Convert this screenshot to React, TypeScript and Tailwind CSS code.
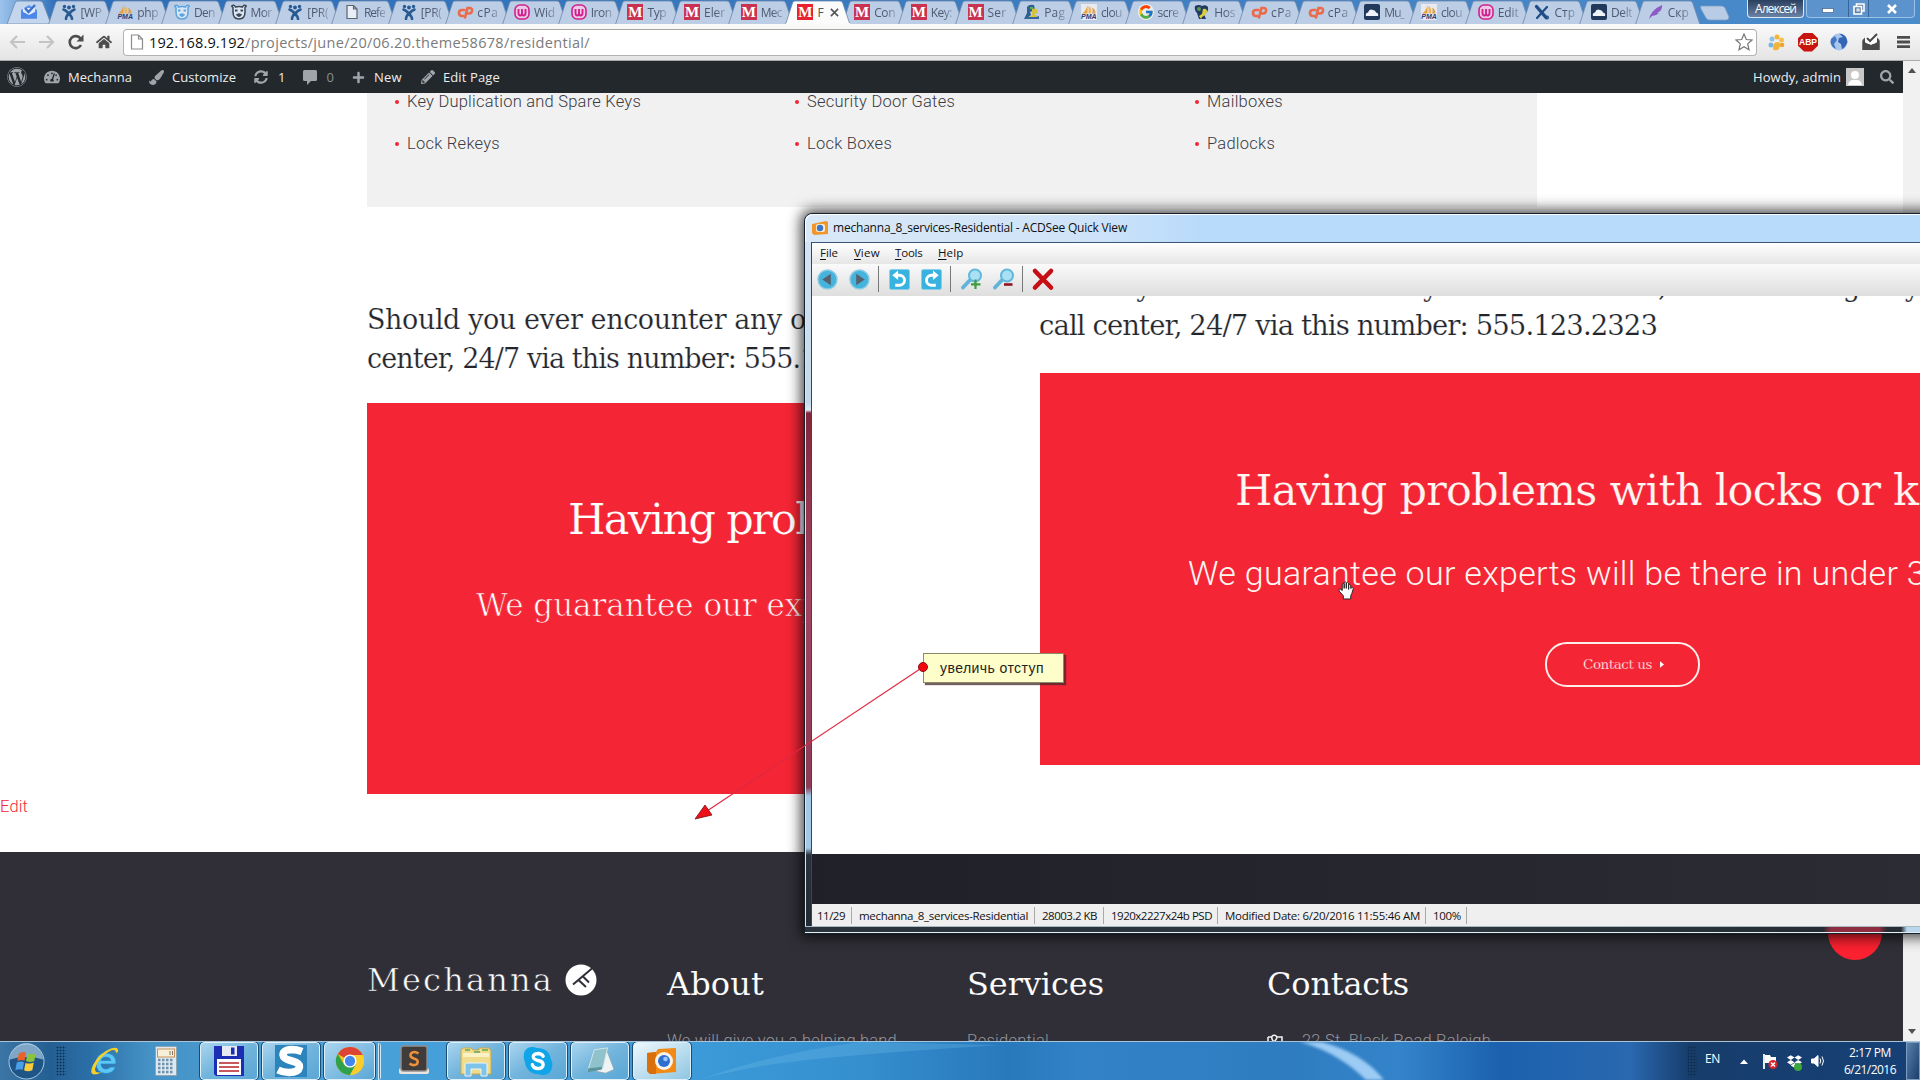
import React, { useLayoutEffect, useRef, useState } from "react";
import { FaWordpress, FaTachometerAlt, FaPaintBrush, FaSyncAlt, FaDropbox, FaHome, FaPlus, FaPencilAlt, FaSearch } from "react-icons/fa";
import { FcGoogle } from "react-icons/fc";

/* Text run spread to a given width through its letter spacing. */
function Fit({ w, children, className = "" }: { w: number; children: string; className?: string }) {
  const ref = useRef<HTMLSpanElement>(null);
  const [ls, setLs] = useState(0);
  useLayoutEffect(() => {
    if (ref.current) setLs((w - ref.current.getBoundingClientRect().width) / children.length);
  }, [w, children]);
  return (
    <span ref={ref} className={"inline-block whitespace-pre " + className} style={{ letterSpacing: ls + "px" }}>
      {children}
    </span>
  );
}

const slab = "font-['Roboto_Slab','DejaVu_Serif',serif]";
const ui = "font-['Segoe_UI','Open_Sans','Noto_Sans',sans-serif]";

function Favicon({ kind }: { kind: string }) {
  switch (kind) {
    case "jira":
      return (
        <svg viewBox="0 0 16 16" className="size-4">
          <g fill="none" stroke="#285a92" strokeWidth="2.6" strokeLinecap="round">
            <path d="M2.5 5.5C5 6.5 7.500 8.500 8 11M13.500 5.500C11 6.500 8.500 8.500 8 11" />
            <path d="M5 15C5 12 7 10 9 8.800M11 15C11 12.500 9.500 11 7 9" />
          </g>
          <circle cx="3.500" cy="2.500" r="1.700" fill="#285a92" />
          <circle cx="8" cy="3.500" r="1.900" fill="#285a92" />
          <circle cx="12.500" cy="2.500" r="1.700" fill="#285a92" />
        </svg>
      );
    case "pma":
    case "pma2":
      return (
        <div className={"flex size-4 flex-col items-center justify-end " + (kind === "pma2" ? "bg-[#e8eaf0]" : "")}>
          <svg viewBox="0 0 16 10" className="h-2.5 w-4">
            <path d="M1 9.500C4 8 6 4 6.500 0.500V9.500z" fill="#e8a13c" />
            <path d="M7.500 9.500V2C10 3 10.500 6 10 9.500z" fill="#f0b45c" />
            <path d="M11 9.500C12 7 11.500 5 11 3.500C14 5 14.500 7.500 14.500 9.500z" fill="#d9a25a" />
          </svg>
          <span className="font-['Liberation_Sans',sans-serif] text-[7px] leading-[6px] font-bold text-[#2b3c7a] italic">PMA</span>
        </div>
      );
    case "bear":
    case "bear2": {
      const c = kind === "bear" ? "#5aa2e0" : "#3b4652";
      return (
        <svg viewBox="0 0 16 16" className="size-4" fill="none" stroke={c} strokeWidth="1.500">
          <path d="M2 3.500Q0 2 1.500 1.500Q3.500 0.800 4.500 3Q8 2 11.500 3Q12.500 0.800 14.500 1.500Q16 2 14 3.500V8Q14 15 8 15Q2 15 2 8z" fill="#dbe7f4" />
          <path d="M4 6.500h2.500M9.500 6.500h2.500" strokeWidth="1.800" />
          <path d="M5.500 10.500Q8 8.800 10.500 10.500Q10 12.500 8 12.500Q6 12.500 5.500 10.500z" fill={c} strokeWidth="0.800" />
        </svg>
      );
    }
    case "doc":
      return (
        <svg viewBox="0 0 16 16" className="size-4" fill="#e9eef6" stroke="#5c6470" strokeWidth="1.200">
          <path d="M3 1.500h6.500l3.500 3.500v9.500H3zM9.500 1.500V5H13" />
        </svg>
      );
    case "cp":
      return (
        <svg viewBox="0 0 17 16" className="h-4 w-[17px]" fill="none" stroke="#ea6a4a" strokeWidth="2.600" strokeLinecap="round">
          <path d="M7.500 6H5Q2 6 2 9Q2 12 5 12H6" />
          <path d="M8 13.500L10.500 4H12.500Q15.500 4 15 7Q14.500 9.500 12 9.500H11" />
        </svg>
      );
    case "w":
      return (
        <svg viewBox="0 0 16 16" className="size-4" fill="none" stroke="#d1208e">
          <rect x="1" y="1" width="14" height="14" rx="5" strokeWidth="1.600" fill="#ecc9e4" />
          <path d="M4.500 5v4Q4.500 11.500 6.300 11.500Q8 11.500 8 9.500V5M8 9.500Q8 11.500 9.700 11.500Q11.500 11.500 11.500 9V5" strokeWidth="1.900" />
        </svg>
      );
    case "m":
    case "mA":
      return (
        <div className={"flex size-4 items-center justify-center font-['Liberation_Serif',serif] text-[15px] leading-4 font-bold text-white " + (kind === "mA" ? "bg-[#e8232f]" : "bg-[#c93352]")}>M</div>
      );
    case "py":
      return (
        <svg viewBox="0 0 16 16" className="size-4">
          <path d="M3 3Q5 0 10 1L11 6L6 8L7 11L2 15H0L3 9z" fill="#2d5f8f" />
          <path d="M8 5Q13 3 14 8Q13 10 10 10L13 12V15H3L8 11z" fill="#d8c23a" />
          <path d="M1 15h14v-3l-3 1H4z" fill="#35679a" />
          <path d="M6 3h3v2H6z" fill="#5fae68" />
        </svg>
      );
    case "host":
      return (
        <svg viewBox="0 0 16 16" className="size-4">
          <path d="M1 2Q5 0 8 2Q12 0 14 3Q15 8 10 10L12 15H5L3 9Q0 6 1 2z" fill="#223a63" />
          <path d="M9 5Q13 4 13 8Q12 11 8 13L7 15L5 12L8 10z" fill="#d9cf3a" />
          <circle cx="5" cy="5" r="2" fill="#5b9a4a" />
        </svg>
      );
    case "g":
      return <FcGoogle className="size-4 rounded-full bg-[#e6edf7]" />;
    case "cloud":
      return (
        <svg viewBox="0 0 16 16" className="size-4">
          <rect width="16" height="16" rx="2" fill="#22395c" />
          <path d="M2 12Q1 9 4 8.500Q5.500 4 9 6Q11.500 6 12 8.500Q15 9 14 12z" fill="#eef3fa" />
        </svg>
      );
    case "x":
      return (
        <svg viewBox="0 0 16 16" className="size-4" fill="none" stroke="#1f4d86" strokeLinecap="round">
          <path d="M2.500 2.500L12 13.500" strokeWidth="3.400" />
          <path d="M13 3L3 14" strokeWidth="2.200" />
          <circle cx="13" cy="13.500" r="1.400" strokeWidth="1.200" />
        </svg>
      );
    default:
      return (
        <svg viewBox="0 0 16 16" className="size-4">
          <path d="M1 15Q3 6 14 1Q15 6 9 9L11 9Q8 12 4 12z" fill="#8a5cc4" />
        </svg>
      );
  }
}

const tabs: [string, string][] = [
  ["jira", "[WP"], ["pma", "php"], ["bear", "Den"], ["bear2", "Mor"], ["jira", "[PR("], ["doc", "Refe"], ["jira", "[PR("],
  ["cp", "cPa"], ["w", "Wid"], ["w", "Iron"], ["m", "Typ"], ["m", "Eler"], ["m", "Mec"], ["mA", "F"], ["m", "Con"],
  ["m", "Key:"], ["m", "Ser"], ["py", "Pag"], ["pma2", "clou"], ["g", "scre"], ["host", "Hos"], ["cp", "cPa"],
  ["cp", "cPa"], ["cloud", "Mu_"], ["pma2", "clou"], ["w", "Edit"], ["x", "Стр"], ["cloud", "Delt"], ["feather", "Скр"],
];

function TabStrip() {
  return (
    <div className="flex h-6 bg-linear-to-r from-[#9cc3ec] via-[#2b6db8] via-3% to-[#4b8ccb]">
      <div className="relative flex h-6 w-[48px] shrink-0 items-start pt-1 pl-[21px]">
        <svg viewBox="0 0 52 24" className="absolute top-0 left-[7px] h-6 w-[52px]">
          <path d="M0 24L8 3Q9 1 11 1H33Q35 1 36 3L44 24z" fill="#c3d6ee" stroke="#7089a8" strokeWidth="0.800" />
        </svg>
        <svg viewBox="0 0 16 16" className="relative size-4">
          <path d="M0 6L8 1L16 6V14.500H0z" fill="#5b94ee" />
          <path d="M2 4h12v4L8 11L2 8z" fill="#dfeafb" />
          <path d="M4 4L7.500 8L14 1" fill="none" stroke="#3f6fca" strokeWidth="2.400" />
          <path d="M0 7L8 11.500L16 7V14.500H0z" fill="#4b86e8" />
        </svg>
      </div>
      {tabs.map(([k, t], i) => {
        const on = k === "mA";
        return (
          <div key={i} className={"relative flex h-6 w-[56.7px] shrink-0 pt-1 pl-[12.5px] " + (on ? "z-10" : "")}>
            <svg viewBox="0 0 68 24" className="absolute top-0 left-0 h-6 w-[68px]">
              <path d="M0.500 24.500L7.500 3Q8 1 10 1H55Q57 1 57.700 3L65 24.500z" fill={on ? "#fbfbfc" : "#bccde6"} stroke="#6f88ab" strokeWidth="0.800" />
              {on && <path d="M1 24h64" stroke="#fbfbfc" strokeWidth="2" />}
            </svg>
            <div className="relative h-4 w-[17px] shrink-0"><Favicon kind={k} /></div>
            <div className={ui + " relative ml-[3px] text-[12px] leading-[18px] whitespace-nowrap " + (on ? "w-[8px] text-[#555]" : "text-[#4c5a6e] [mask-image:linear-gradient(90deg,#000_55%,rgba(0,0,0,0.35))]")}>{on ? t : <Fit w={t === "Ser" || t === "Typ" ? 19 : 21}>{t}</Fit>}</div>
            {on && (
              <svg viewBox="0 0 10 10" className="relative mt-1 ml-[5px] size-[9px] shrink-0"><path d="M1 1L9 9M9 1L1 9" stroke="#555" strokeWidth="1.800" /></svg>
            )}
          </div>
        );
      })}
      <svg viewBox="0 0 34 24" className="relative ml-[6px] h-6 w-[34px] shrink-0">
        <path d="M3 6H23Q26 6 27 8L31 17Q31 20 28 20H12Q9 20 8 18L3 9Q2 6 3 6z" fill="#b9cce6" stroke="#7f9dc2" strokeWidth="0.800" />
      </svg>
      <div className={ui + " ml-auto flex h-[18px] w-[57px] items-center justify-center rounded-b border border-t-0 border-[#dbe8f6] bg-linear-to-b from-[#2c3f5e] to-[#6a83a6] text-[12px] text-white"}>
        <Fit w={41}>Алексей</Fit>
      </div>
      <div className="mr-[5px] ml-[2px] flex h-[18px] w-[109px] divide-x divide-[#35659b] rounded-b border border-t-0 border-[#9cc0e6] bg-[#5d93cd]">
        <div className="flex w-[42px] items-center justify-center pt-1"><svg viewBox="0 0 12 5" className="h-[5px] w-3"><rect x="0.500" y="0.500" width="11" height="4" fill="#fff" stroke="#36506e" strokeWidth="0.600" /></svg></div>
        <div className="flex w-[20px] items-center justify-center"><svg viewBox="0 0 12 12" className="size-3" fill="#5d7ea6" stroke="#fff" strokeWidth="1.600"><path d="M3.500 3V1h7.500v7h-2" /><rect x="1" y="3.500" width="7.500" height="7.500" /><rect x="4" y="6" width="2" height="2" strokeWidth="1" /></svg></div>
        <div className="flex grow items-center justify-center"><svg viewBox="0 0 12 10" className="h-2.5 w-3"><path d="M2 1L10 9M10 1L2 9" stroke="#fff" strokeWidth="2.600" /></svg></div>
      </div>
    </div>
  );
}

function Toolbar() {
  return (
    <div className="flex h-[37px] items-center border-b border-[#a9a9a9] bg-linear-to-b from-[#fafafa] to-[#e4e4e4]">
      <svg viewBox="0 0 16 14" className="ml-[9px] h-3.5 w-4" fill="none" stroke="#c3c3c3" strokeWidth="2.200"><path d="M16 7H2M8 1L2 7L8 13" /></svg>
      <svg viewBox="0 0 16 14" className="ml-[14px] h-3.5 w-4" fill="none" stroke="#c3c3c3" strokeWidth="2.200"><path d="M0 7H14M8 1L14 7L8 13" /></svg>
      <svg viewBox="0 0 16 16" className="ml-[13px] size-4" fill="none" stroke="#4d4d4d" strokeWidth="2.600"><path d="M13 11A6 6 0 1 1 12.500 4.500" /><path d="M15.500 0.500V7.500H8.500z" fill="#4d4d4d" stroke="none" /></svg>
      <FaHome className="ml-[12px] size-4 text-[#4d4d4d]" />
      <div className="ml-[11px] flex h-[27px] w-[1634px] items-center rounded-sm border border-[#b3b3b3] border-t-[#a0a89e] bg-white">
        <svg viewBox="0 0 14 16" className="ml-[6px] h-4 w-3.5" fill="#fff" stroke="#8c8c8c" strokeWidth="1.200"><path d="M1.500 1h7l4 4v10h-11zM8.500 1v4h4" /></svg>
        <div className={ui + " ml-[5px] pt-px text-[14.5px] text-[#7b7b7b]"}><Fit w={96} className="text-[#111]">192.168.9.192</Fit><Fit w={345}>/projects/june/20/06.20.theme58678/residential/</Fit></div>
        <svg viewBox="0 0 18 18" className="mr-[3px] ml-auto size-[18px]" fill="#fff" stroke="#777" strokeWidth="1.200"><path d="M9 1L11.300 6.500L17 7L12.700 10.900L14 16.700L9 13.700L4 16.700L5.300 10.900L1 7L6.700 6.500z" /></svg>
      </div>
      <svg viewBox="0 0 17 17" className="ml-[11px] size-[17px]">
        <circle cx="4" cy="5" r="2.500" fill="#8ec1ea" /><circle cx="9" cy="3" r="2.500" fill="#f2b53a" /><circle cx="13.500" cy="6" r="2.500" fill="#f4c04f" />
        <circle cx="14" cy="11" r="2.300" fill="#eba52f" /><circle cx="3" cy="11" r="2.500" fill="#7ab3e6" /><path d="M5 15Q5 8 9 8Q13 8 12 12Q11 17 8 16Q6 17 5 15z" fill="#f2b53a" />
      </svg>
      <div className="ml-[13px] flex h-[19px] w-5 items-center justify-center bg-[#c8150f] font-['Liberation_Sans',sans-serif] text-[8.500px] font-bold text-white [clip-path:polygon(30%_0,70%_0,100%_30%,100%_70%,70%_100%,30%_100%,0_70%,0_30%)]">ABP</div>
      <svg viewBox="0 0 18 18" className="ml-[12px] size-[18px]"><circle cx="9" cy="9" r="8.500" fill="#a9c7ee" /><path d="M9 0.500Q17 1 17.500 9Q15 15 12 16L11 11L8 9L9 5L13 4z" fill="#3464b4" /><path d="M1 6L5 3L7 7L4 11L6 16Q1 14 0.500 9z" fill="#4576c4" /></svg>
      <svg viewBox="0 0 18 18" className="ml-[14px] size-[18px]"><path d="M0.500 7L3 4.500V11h12V4.500L17.500 7V17H0.500z" fill="#4a4a4a" /><path d="M3 5L9 1L15 5V9L9 12L3 9z" fill="#fff" /><path d="M0.500 8L9 12.500L17.500 8V17H0.500z" fill="#4a4a4a" /><path d="M5 5L8 8L15 1" fill="none" stroke="#4a4a4a" strokeWidth="2" /></svg>
      <svg viewBox="0 0 14 14" className="ml-[17px] h-3.5 w-[13px]" fill="#4d4d4d"><path d="M0 0.500h14v3H0zM0 5.500h14v3H0zM0 10.500h14v3H0z" /></svg>
    </div>
  );
}

function AdminBar() {
  return (
    <div className={ui + " flex h-8 shrink-0 items-center bg-[#23282d] text-[13px] text-[#eee]"}>
      <FaWordpress className="ml-[7px] size-5 text-[#a0a5aa]" />
      <FaTachometerAlt className="ml-[17px] size-4 text-[#a0a5aa]" />
      <Fit w={64} className="ml-[8px] pt-px">Mechanna</Fit>
      <FaPaintBrush className="ml-[17px] size-[15px] text-[#a0a5aa]" />
      <Fit w={64} className="ml-[8px] pt-px">Customize</Fit>
      <FaSyncAlt className="ml-[18px] size-[14px] text-[#a0a5aa]" />
      <span className="ml-[10px] pt-px">1</span>
      <svg viewBox="0 0 14 15" className="ml-[18px] h-[15px] w-3.5" fill="#a0a5aa"><path d="M1.500 0h11Q14 0 14 1.500v8Q14 11 12.500 11H8L4 15V11H1.500Q0 11 0 9.500v-8Q0 0 1.500 0z" /></svg>
      <span className="ml-[9px] pt-px text-[#8a8f94]">0</span>
      <FaPlus className="ml-[18px] size-[13px] text-[#a0a5aa]" />
      <Fit w={28} className="ml-[9px] pt-px">New</Fit>
      <FaPencilAlt className="ml-[19px] size-[14px] text-[#a0a5aa]" />
      <Fit w={57} className="ml-[8px] pt-px">Edit Page</Fit>
      <Fit w={88} className="mr-[5px] ml-auto pt-px">Howdy, admin</Fit>
      <svg viewBox="0 0 18 18" className="size-[18px]"><rect width="18" height="18" fill="#c8c8c8" /><circle cx="9" cy="7" r="4" fill="#fff" /><path d="M2 17Q3 12 7 12H11Q15 12 16 17z" fill="#fff" /></svg>
      <FaSearch className="mr-[9px] ml-[16px] size-[14px] text-[#a0a5aa]" />
    </div>
  );
}

const columns: [string, number][][] = [
  [["Key Duplication and Spare Keys", 234], ["Lock Rekeys", 93]],
  [["Security Door Gates", 148], ["Lock Boxes", 85]],
  [["Mailboxes", 76], ["Padlocks", 68]],
];

function SitePage() {
  return (
    <div className="flex w-[1903px] flex-col overflow-hidden bg-white font-['Roboto',sans-serif]">
      <AdminBar />
      <div className="ml-[367px] flex h-[114px] w-[1170px] shrink-0 bg-[#f1f1f1] pl-[28px]">
        {columns.map((c, i) => (
          <div key={i} className="-mt-[12px] w-[400px] shrink-0">
            {c.map(([t, w]) => (
              <div key={t} className="flex h-[42px] items-center text-[16.500px] font-light text-[#3a3a42]">
                <span className="mr-[8px] size-1 rounded-full bg-[#f42535]" />
                <Fit w={w}>{t}</Fit>
              </div>
            ))}
          </div>
        ))}
      </div>
      <div className={slab + " mt-[93px] ml-[367px] h-[103px] shrink-0 text-[27px] leading-[39px] text-[#23252b] [-webkit-text-stroke:0.2px_#fff]"}>
        <div><Fit w={484}>Should you ever encounter any of th</Fit></div>
        <div><Fit w={482}>center, 24/7 via this number: 555.123</Fit></div>
      </div>
      <div className={slab + " ml-[367px] h-[391px] w-[1170px] shrink-0 bg-[#f42535] text-white"}>
        <div className="pt-[86px] pl-[201px] text-[43px] leading-[60px] [-webkit-text-stroke:0.2px_#f42535]"><Fit w={253}>Having prob</Fit></div>
        <div className="mt-[34px] pl-[109px] text-[31px] leading-[44px] [-webkit-text-stroke:0.7px_#f42535]"><Fit w={346}>We guarantee our exp</Fit></div>
      </div>
      <div className="h-[58px] shrink-0 text-[16.500px] leading-[25px] font-light text-[#f42535]"><Fit w={28}>Edit</Fit></div>
      <div className="relative flex h-[189px] shrink-0 overflow-hidden bg-[#302f37] pl-[367px] text-white">
        <div className="absolute top-[54px] left-[1828px] size-[54px] rounded-full bg-[#fb2130]" />
        <div className="flex w-[300px] items-start pt-[109px]">
          <div className={slab + " -mt-px text-[32px] leading-[40px] [-webkit-text-stroke:0.6px_#302f37]"}><Fit w={187}>Mechanna</Fit></div>
          <svg viewBox="0 0 32 32" className="mt-[3px] ml-[11px] size-8">
            <circle cx="16" cy="16" r="15.500" fill="#fff" />
            <path d="M27.500 4L8 20.500M13.500 16L21 23M18 12.500L24 18.500" stroke="#302f37" strokeWidth="2" fill="none" />
          </svg>
        </div>
        {([["About", 97, "We will give you a helping hand", 230], ["Services", 137, "Residential", 82]] as [string, number, string, number][]).map(([h, w, t, tw]) => (
          <div key={h} className="w-[300px] pt-[110px]">
            <div className={slab + " text-[32px] leading-[44px] [-webkit-text-stroke:0.1px_#302f37]"}><Fit w={w}>{h}</Fit></div>
            <div className="mt-[22px] text-[16.500px] leading-[25px] font-light text-[#94949a]"><Fit w={tw}>{t}</Fit></div>
          </div>
        ))}
        <div className="pt-[110px]">
          <div className={slab + " text-[32px] leading-[44px] [-webkit-text-stroke:0.1px_#302f37]"}><Fit w={142}>Contacts</Fit></div>
          <div className="mt-[22px] flex text-[16.500px] leading-[25px] font-light text-[#94949a]">
            <svg viewBox="0 0 16 16" className="mt-[6px] mr-[19px] size-4" fill="none" stroke="#eee" strokeWidth="1.600"><path d="M1 3h3M10 3h5v11H1V3M5 2Q8 0 10 3Q10 5 7 8Q4 5 5 2" /></svg>
            <Fit w={189}>22 St. Black Road Raleigh</Fit>
          </div>
        </div>
      </div>
    </div>
  );
}

function Rotate({ flip }: { flip?: boolean }) {
  return (
    <svg viewBox="0 0 22 22" className={"size-[21px] " + (flip ? "-scale-x-100" : "")}>
      <rect x="0.500" y="0.500" width="21" height="21" rx="2" fill="#38b2de" stroke="#8ad0ea" />
      <path d="M8 6.500H11A5 5 0 0 1 11 17H6.500" fill="none" stroke="#fff" strokeWidth="3" />
      <path d="M3.500 6.500L9.500 1.500V11.500z" fill="#fff" />
    </svg>
  );
}

function Magnifier({ plus }: { plus?: boolean }) {
  return (
    <svg viewBox="0 0 22 22" className="size-[22px]">
      <path d="M2 19.500L9 12" stroke="#5fb4da" strokeWidth="3.800" strokeLinecap="round" />
      <circle cx="14" cy="7.500" r="6" fill="#a9e0f4" stroke="#5fb8dc" strokeWidth="2" />
      {plus ? <path d="M14.500 11.500V21M10 16.300H19.500" stroke="#3f9c3c" strokeWidth="2.200" /> : <path d="M11 16.500H19.500" stroke="#8f1424" strokeWidth="2.600" />}
    </svg>
  );
}

const statusItems: [string, number, number][] = [
  ["11/29", 28, 39], ["mechanna_8_services-Residential", 169, 183], ["28003.2 KB", 55, 69],
  ["1920x2227x24b PSD", 101, 114], ["Modified Date: 6/20/2016 11:55:46 AM", 195, 208], ["100%", 28, 41],
];

function QuickView() {
  return (
    <div className="absolute top-[213px] left-[804px] flex h-[721px] w-[1130px] flex-col rounded-tl-lg border border-[#14202c] bg-[#b9dafb] shadow-[0_0_14px_3px_rgba(0,0,0,0.75)]">
      <div className="flex h-[28px] shrink-0 items-start rounded-tl-lg border-t border-l border-white bg-linear-to-r from-[#d9e8f7] via-[#cfe3f8] via-25% to-[#b9dbfb] to-35%">
        <svg viewBox="0 0 16 14" className="mt-[6px] ml-[6px] h-3.5 w-4"><path d="M0 3L14 0L16 1V13L2 14L0 12z" fill="#f0962a" /><rect x="4" y="3" width="9" height="8" rx="2" fill="#fbe9c8" /><circle cx="8" cy="7" r="3.200" fill="#3a76cc" /></svg>
        <Fit w={294} className={ui + " mt-[3px] ml-[5px] text-[12px] leading-5 text-[#111]"}>mechanna_8_services-Residential - ACDSee Quick View</Fit>
      </div>
      <div className="flex min-h-0 grow">
        <div className="w-[7px] shrink-0 border-r border-l border-[#d8e4ee] border-r-[#3a4652] bg-[linear-gradient(180deg,#d4e4f4_0,#c3d8ea_160px,#e0eaf2_168px,#83273c_171px,#a24562_350px,#8f3b55_545px,#a3c9e8_554px,#a3c9e8_606px,#2a323d_613px,#232a33_100%)]" />
        <div className="flex grow flex-col">
          <div className="flex h-[22px] shrink-0 items-start border-t border-[#3a5676] bg-linear-to-b from-white to-[#e6e6e6] pt-px font-['Tahoma','Open_Sans','Noto_Sans',sans-serif] text-[11.500px] leading-[18px] text-[#111]">
            {([["File", 18, 34], ["View", 25, 41], ["Tools", 27, 43], ["Help", 23, 40]] as [string, number, number][]).map(([t, w, b], i) => (
              <div key={t} className={"flex " + (i === 0 ? "ml-[8px]" : "")} style={{ width: b }}>
                <span className="underline underline-offset-2">{t[0]}</span><Fit w={w - 6}>{t.slice(1)}</Fit>
              </div>
            ))}
          </div>
          <div className="flex h-[32px] shrink-0 items-center bg-linear-to-b from-[#fafafa] to-[#dedede] pb-[2px]">
            <svg viewBox="0 0 22 22" className="ml-[5px] size-[21px]"><circle cx="11" cy="11" r="10" fill="#45b3dc" stroke="#8ccde6" strokeWidth="1.500" /><path d="M5.500 11L14.500 5V17z" fill="#55616e" /></svg>
            <svg viewBox="0 0 22 22" className="ml-[11px] size-[21px]"><circle cx="11" cy="11" r="10" fill="#45b3dc" stroke="#8ccde6" strokeWidth="1.500" /><path d="M16.500 11L7.500 5V17z" fill="#55616e" /></svg>
            <div className="ml-[8px] h-[26px] w-px bg-[#777]" />
            <div className="ml-[10px]"><Rotate /></div>
            <div className="ml-[11px]"><Rotate flip /></div>
            <div className="ml-[8px] h-[26px] w-px bg-[#777]" />
            <div className="ml-[10px]"><Magnifier plus /></div>
            <div className="ml-[10px]"><Magnifier /></div>
            <div className="ml-[7px] h-[26px] w-px bg-[#777]" />
            <svg viewBox="0 0 24 24" className="ml-[8px] size-6"><path d="M4 4L20 20.500M20 4L4 20.500" stroke="#c60f14" strokeWidth="4.600" strokeLinecap="round" /></svg>
          </div>
          <div className="flex h-[608px] shrink-0 flex-col overflow-hidden bg-white">
            <div className={slab + " flow-root h-[77px] shrink-0 pl-[227px] text-[27.500px] leading-[38px] whitespace-nowrap text-[#23252b] [-webkit-text-stroke:0.2px_#fff]"}>
              <div className="-mt-[29px]"><Fit w={880}>Should you ever encounter any of these troubles, call our emergency</Fit></div>
              <div className="mt-[1px]"><Fit w={618}>call center, 24/7 via this number: 555.123.2323</Fit></div>
            </div>
            <div className="ml-[228px] h-[392px] w-[900px] shrink-0 overflow-hidden bg-[#f42535] whitespace-nowrap text-[#fff6f2]">
              <div className={slab + " pt-[87px] pl-[195px] text-[43px] leading-[60px] [-webkit-text-stroke:0.2px_#f42535]"}><Fit w={775}>Having problems with locks or keys?</Fit></div>
              <div className="mt-[28px] pl-[148px] font-['Roboto',sans-serif] text-[34px] leading-[50px] font-light"><Fit w={738}>We guarantee our experts will be there in under 3</Fit></div>
              <div className={slab + " mt-[44px] ml-[505px] flex h-[45px] w-[155px] items-center rounded-[22px] border-2 border-[#ffeeea] pl-[36px] text-[13.500px] [-webkit-text-stroke:0.25px_#f42535]"}>
                <Fit w={69}>Contact us</Fit>
                <svg viewBox="0 0 5 8" className="ml-[8px] h-[7px] w-1" fill="#fff"><path d="M0 0L5 4L0 8z" /></svg>
              </div>
            </div>
            <div className="mt-[89px] h-[50px] shrink-0 bg-linear-to-r from-[#202128] to-[#2c2c34]" />
          </div>
          <div className="flex h-[23px] shrink-0 items-center bg-[#f0eff0] font-['Tahoma','Open_Sans','Noto_Sans',sans-serif] text-[11.500px] text-[#111]">
            {statusItems.map(([t, w, b], i) => (
              <div key={t} className={"h-[17px] border-r border-[#a9a9a9] leading-[18px] " + (i === 0 ? "pl-[5px]" : "pl-[7px]")} style={{ width: b + (i ? 0 : 1) }}>
                <Fit w={w}>{t}</Fit>
              </div>
            ))}
          </div>
        </div>
      </div>
      <div className="h-[7px] shrink-0 border-y border-t-[#a9b9c0] border-b-[#e6f0f2] bg-[linear-gradient(90deg,#2a323b_0,#2c3840_600px,#252c33_1018px,#8f2c40_1026px,#8f2c40_1074px,#252c33_1082px,#252c33_1096px,#b8d6ee_1102px)]" />
    </div>
  );
}

function Note() {
  return (
    <>
      <svg viewBox="0 0 250 180" className="absolute top-[650px] left-[685px] h-[180px] w-[250px]">
        <path d="M238 17L22 161" stroke="#e02840" strokeWidth="1.100" />
        <path d="M10 169L20 155L27 165z" fill="#f01018" stroke="#701018" strokeWidth="0.800" />
      </svg>
      <div className="absolute top-[653px] left-[923px] flex h-[30px] w-[141px] items-center border border-[#8b8b6b] bg-[#fefecb] pl-[16px] font-['Liberation_Sans',sans-serif] text-[14px] text-[#222] shadow-[2px_2px_1px_rgba(70,40,40,0.75)]">
        <Fit w={104}>увеличь отступ</Fit>
      </div>
      <div className="absolute top-[662px] left-[918px] size-[10px] rounded-full border border-[#8b1018] bg-[#f5040c]" />
      <svg viewBox="0 0 16 18" className="absolute top-[581px] left-[1338px] h-[19px] w-[17px]">
        <path d="M5 17V14L1 9.500Q0 7.500 2 7.500L4 9V3Q4.800 1.500 5.800 3V7V1.500Q6.800 0 7.800 1.500V7V2Q9 0.500 10 2V8V4Q11.300 2.500 12 4V7Q13.500 5 14.500 7L13 12L12 14V17z" fill="#fff" stroke="#222" strokeWidth="0.900" />
      </svg>
    </>
  );
}

function TaskButton({ children, active }: { children: React.ReactNode; active?: boolean }) {
  return (
    <div className={"mr-[4px] flex h-[38px] w-[58px] shrink-0 items-center justify-center rounded-sm border border-[#e0f0fa] outline outline-[#1d4c70] " + (active ? "bg-linear-to-br from-[#eef8fd] to-[#8ec6e2]" : "bg-linear-to-br from-[#a9d5ef] via-[#71b4dc] to-[#5aa7d6]")}>{children}</div>
  );
}

function Grip() {
  return <div className="h-[30px] w-[10px] shrink-0 bg-[radial-gradient(circle,#0d2c4a_0.8px,transparent_1.1px)] bg-[length:3px_3px]" />;
}

function Taskbar() {
  return (
    <div className={ui + " relative flex h-[39px] items-center overflow-hidden border-t border-[#a8c4d8] bg-[linear-gradient(90deg,#3b76a6_0,#245f93_50px,#2b6fa8_90px,#4592c6_150px,#4ba2d8_300px,#3c9ad8_700px,#3690d0_850px,#2879bc_1010px,#3282c8_1080px,#2f7cc0_1290px,#3484cb_1400px,#1b61ae_1500px,#2a68b0_1630px,#173d6b_1690px,#164075_1900px)] text-white"}>
      <svg viewBox="0 0 1920 38" className="absolute inset-0 h-[38px] w-[1920px]">
        <path d="M700 38C760 20 830 14 1000 3L860 0C800 8 740 22 700 38z" fill="#7cc2ea" opacity="0.250" />
        <path d="M1300 0C1330 8 1352 24 1366 38H1384C1370 20 1350 8 1322 0z" fill="#a8d4fa" opacity="0.900" className="blur-[1.5px]" />
      </svg>
      <svg viewBox="0 0 38 38" className="relative ml-[8px] size-[37px] shrink-0">
        <circle cx="19" cy="19" r="18" fill="#1f5586" stroke="#a9cde6" strokeWidth="1" />
        <path d="M2 17A17 17 0 0 1 36 17Q19 12 2 17z" fill="#a9c9e2" opacity="0.700" />
        <path d="M11 11Q15 8 18.500 10L17 18Q13 16.500 9.500 18.500z" fill="#e8632c" />
        <path d="M20 10.500Q24 12.500 28.500 10.500L27 18.500Q22.500 20.500 18.500 18.500z" fill="#8ac33c" />
        <path d="M9 20Q13 18 16.500 20L15 27.500Q11 26 7.500 28z" fill="#4aa0e8" />
        <path d="M18 20.500Q22.500 22 26.500 20L25 28Q20.500 30 16.500 28z" fill="#f8cc3c" />
      </svg>
      <div className="relative ml-[11px]"><Grip /></div>
      <svg viewBox="0 0 32 32" className="relative ml-[23px] size-8 shrink-0">
        <path d="M27 19H12Q12.500 24 17 24Q20 24 21.500 22H26.500Q24 28.500 17 28.500Q7 28 7 18Q7 8.500 17 8Q27.500 8.500 27 19zM12 15.500H22Q21 12 17 12Q13 12 12 15.500z" fill="#5cc6f4" stroke="#1f86c8" strokeWidth="0.700" />
        <path d="M29 7Q30 1 22 3.500Q10 8 4 20Q0 29 5 29.500Q9 29.500 13 27Q6 29 6 24Q9 13 20 6.500Q27 3 27 8z" fill="#f5cf2a" />
      </svg>
      <svg viewBox="0 0 22 30" className="relative ml-[34px] h-[30px] w-[22px] shrink-0">
        <rect x="0.500" y="0.500" width="21" height="29" rx="1" fill="#dfe8ee" stroke="#8fa5b3" />
        <rect x="2.500" y="3" width="17" height="8" fill="#f8efd8" stroke="#c8925a" />
        <path d="M3 14h16M3 18h16M3 22h16M3 26h16" stroke="#6d92b0" strokeWidth="2.400" strokeDasharray="2.500 1.500" />
        <path d="M15 5v4M17.500 5v4" stroke="#555" strokeWidth="0.800" />
      </svg>
      <div className="relative ml-[23px] flex items-center">
        <TaskButton>
          <svg viewBox="0 0 32 32" className="size-8"><path d="M1 1H31V31H3L1 29z" fill="#1c2fb4" /><rect x="9" y="1" width="15" height="10" fill="#e8eaf2" /><rect x="18" y="2.500" width="3.500" height="7" fill="#1c2fb4" /><rect x="4" y="14" width="24" height="16" fill="#fff" /><path d="M6 18h20M6 22h20M6 26h20" stroke="#b9202a" strokeWidth="1.400" /></svg>
        </TaskButton>
        <TaskButton>
          <svg viewBox="0 0 32 32" className="size-8"><rect width="32" height="32" fill="#2b84bc" /><path d="M27 6.500Q22 4.500 16.500 4.500Q8 5 8 10Q8.500 14 17 16Q25 18 24.500 22Q23.500 27.500 14 27.500Q8 27.500 3 25" stroke="#fff" strokeWidth="7.500" fill="none" /></svg>
        </TaskButton>
        <div className="mr-[3px] flex h-[38px] w-[51px] shrink-0 items-center justify-center rounded-sm border border-[#e0f0fa] bg-linear-to-br from-[#a9d5ef] to-[#5aa7d6] outline outline-[#1d4c70]">
          <svg viewBox="0 0 32 32" className="size-[30px]">
            <circle cx="16" cy="16" r="15" fill="#f5c518" />
            <path d="M16 16L3 8.500A15 15 0 0 1 29.500 9.500H16z" fill="#dd4436" />
            <path d="M3 8.500L9.500 19.500L16 31A15 15 0 0 1 3 8.500z" fill="#2fa04c" />
            <path d="M9.500 19.500L15 31H16L22.500 19.500z" fill="#2fa04c" />
            <path d="M22.500 19.500L16 31A15 15 0 0 0 29.500 9.500H18z" fill="#f8cd2c" />
            <circle cx="16" cy="16" r="7" fill="#fff" /><circle cx="16" cy="16" r="5.500" fill="#4287ee" />
          </svg>
        </div>
        <div className="mr-[4px] h-[37px] w-[3px] rounded-r border-x border-[#d4e9f6] bg-[#3a7fb0]" />
        <div className="flex w-[58px] justify-center pb-[3px]">
          <svg viewBox="0 0 32 32" className="size-8"><rect x="1" y="24" width="30" height="6" rx="2" fill="#e9e4df" /><rect x="3" y="2" width="26" height="25" rx="2.500" fill="#3f3c3b" stroke="#948e8a" strokeWidth="1.400" /><path d="M20.500 9.500Q16 6.500 13 9.500Q11 13 16 14.500Q21.500 16 19 20Q15.500 22.500 11.500 19.500" fill="none" stroke="#f0913a" strokeWidth="2.600" /></svg>
        </div>
        <div className="w-[4px]" />
        <TaskButton>
          <svg viewBox="0 0 34 32" className="h-8 w-[34px]"><path d="M2 5L4 3H12L14 5H20V3H30L32 6V29H2z" fill="#efdc8c" stroke="#c7a94a" /><path d="M4 8H30V12H4z" fill="#faf2c4" /><path d="M6 5h5M15 7h6M23 5h6" stroke="#6aa25a" strokeWidth="1.400" /><path d="M6 31V20Q6 18 8 18H26Q28 18 28 20V31H22V24H12V31z" fill="#7ec4ea" stroke="#e8f5fc" /></svg>
        </TaskButton>
        <TaskButton>
          <svg viewBox="0 0 32 32" className="size-[30px]"><path d="M9 1Q13 1 15 2Q28 2 30 15Q32 18 31 23Q29 31 22 31Q19 31 17.500 30Q4 30 2 17Q0 13 1 8Q3 1 9 1z" fill="#0fa5e8" /><path d="M21.500 11Q20 8 16 8Q10.500 8.500 11 12Q11.500 14.500 16 15.500Q21.500 16.500 21.500 20Q21 24 16 24Q11 24 10 20" fill="none" stroke="#fff" strokeWidth="3.600" strokeLinecap="round" /></svg>
        </TaskButton>
        <TaskButton>
          <svg viewBox="0 0 32 32" className="size-[30px]"><path d="M23 4L31 25L22 29L12 27z" fill="#eef3f4" stroke="#8aa4ad" strokeWidth="0.800" /><path d="M10 4L24 2L19 24L3 26z" fill="#8fc2ca" stroke="#d8e8ea" /><path d="M3 24L18 22L18 25L3 28z" fill="#5c949c" /></svg>
        </TaskButton>
        <TaskButton active>
          <svg viewBox="0 0 32 28" className="h-7 w-8"><path d="M1 6L10 5L12 2L30 1V25L4 27L1 24z" fill="#f28a14" /><path d="M1 6L10 5V27L4 27L1 24z" fill="#d9700c" /><circle cx="18" cy="14" r="9" fill="#f7f2ea" /><circle cx="18" cy="14" r="6" fill="#2d6fd0" /><circle cx="19.500" cy="12" r="2.300" fill="#9cc8f8" /></svg>
        </TaskButton>
      </div>
      <div className="relative ml-auto flex h-full items-center text-[12px]">
        <Grip />
        <Fit w={15} className="-mt-[5px] mr-[20px] ml-[8px]">EN</Fit>
        <svg viewBox="0 0 8 5" className="mr-[14px] h-[5px] w-2" fill="#fff"><path d="M0 5L4 0.500L8 5z" /></svg>
        <svg viewBox="0 0 16 16" className="mr-[9px] size-4"><path d="M2 1V16" stroke="#fff" strokeWidth="1.800" /><path d="M3 2H8L9 4H14V10H3z" fill="#fff" /><circle cx="11" cy="11.500" r="4.500" fill="#d8252b" /><path d="M9 9.500L13 13.500M13 9.500L9 13.500" stroke="#fff" strokeWidth="1.400" /></svg>
        <div className="relative mr-[9px] size-[15px]">
          <FaDropbox className="size-[15px] text-white" />
          <div className="absolute right-0 -bottom-0.5 size-2 rounded-full bg-[#3ca53c]" />
        </div>
        <svg viewBox="0 0 14 14" className="mr-[19px] size-[14px]" fill="none" stroke="#fff"><path d="M0.500 5H3L7 1.500V12.500L3 9H0.500z" fill="#fff" /><path d="M9 4.500Q10.500 7 9 9.500M11 2.500Q14 7 11 11.500" /></svg>
        <div className="flex w-[52px] flex-col items-center text-[12px] leading-[17px]"><Fit w={42}>2:17 PM</Fit><Fit w={52}>6/21/2016</Fit></div>
        <div className="ml-[10px] h-[38px] w-[14px] border border-[#7d9cc0] bg-linear-to-br from-[#5c80ac] to-[#1a3e6c]" />
      </div>
    </div>
  );
}

export default function App() {
  return (
    <div className="relative flex h-[1080px] w-[1920px] flex-col overflow-hidden bg-white">
      <TabStrip />
      <Toolbar />
      <div className="relative flex h-[980px] shrink-0 overflow-hidden">
        <SitePage />
        <div className="flex w-[17px] flex-col items-center justify-between bg-[#f1f1f1] py-[7px]">
          <svg viewBox="0 0 8 5" className="h-[5px] w-2" fill="#505050"><path d="M0 5L4 0L8 5z" /></svg>
          <svg viewBox="0 0 8 5" className="h-[5px] w-2" fill="#505050"><path d="M0 0L4 5L8 0z" /></svg>
        </div>
      </div>
      <Taskbar />
      <QuickView />
      <Note />
    </div>
  );
}
